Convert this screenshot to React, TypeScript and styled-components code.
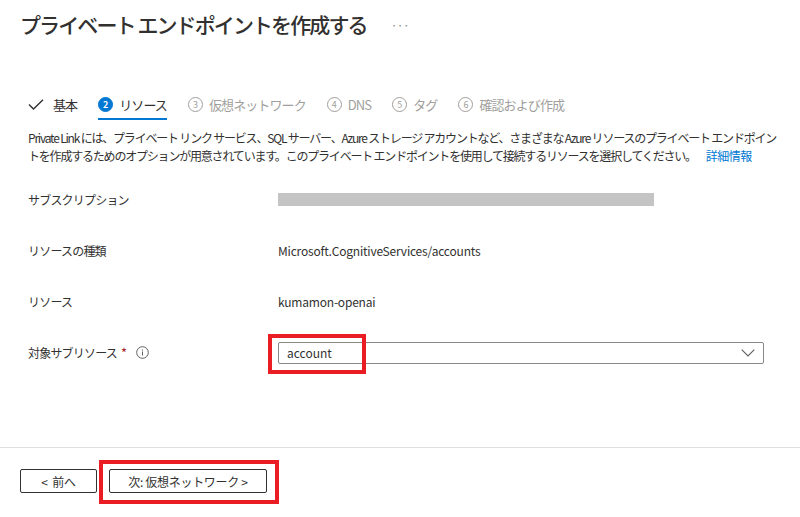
import React from 'react';
import styled, { createGlobalStyle } from 'styled-components';

const FONT = `"Segoe UI", "Noto Sans CJK JP", "Noto Sans", sans-serif`;

const GlobalStyle = createGlobalStyle`
  body {
    margin: 0;
    background: #ffffff;
    font-family: ${FONT};
    color: #323130;
  }
`;

const TABS = [
  { key: 'basic', label: '基本', done: true },
  { key: 'resource', label: 'リソース', num: 2, active: true },
  { key: 'network', label: '仮想ネットワーク', num: 3 },
  { key: 'dns', label: 'DNS', num: 4 },
  { key: 'tag', label: 'タグ', num: 5 },
  { key: 'review', label: '確認および作成', num: 6 },
];

function CheckIcon() {
  return (
    <svg width="19" height="11" viewBox="0 0 19 11" fill="none">
      <path d="M1 5.5 L5.5 10 L15 0.8" stroke="#323130" strokeWidth="1.4" />
    </svg>
  );
}

function Chevron() {
  return (
    <svg width="14" height="8" viewBox="0 0 14 8" fill="none">
      <path d="M0.7 0.7 L7 7 L13.3 0.7" stroke="#605e5c" strokeWidth="1.1" />
    </svg>
  );
}

function InfoIcon() {
  return (
    <svg width="13" height="13" viewBox="0 0 13 13" fill="none">
      <circle cx="6.5" cy="6.5" r="5.8" stroke="#605e5c" strokeWidth="1" />
      <rect x="6" y="5.5" width="1" height="4" fill="#605e5c" />
      <rect x="6" y="3.4" width="1" height="1.2" fill="#605e5c" />
    </svg>
  );
}

export default function App() {
  return (
    <Page>
      <GlobalStyle />
      <Header>
        <Title>プライベート エンドポイントを作成する</Title>
        <More>···</More>
      </Header>

      <Tabs>
        {TABS.map((t) => (
          <Tab key={t.key} active={!!t.active} disabled={!t.active && !t.done}>
            {t.done ? (
              <CheckIcon />
            ) : (
              <Step active={!!t.active}>{t.num}</Step>
            )}
            <TabLabel>{t.label}</TabLabel>
          </Tab>
        ))}
      </Tabs>

      <Description>
        <span>
          Private Link には、プライベート リンク サービス、SQL サーバー、Azure ストレージ アカウントなど、さまざまな Azure リソースのプライベート エンドポイントを作成するためのオプションが用意されています。このプライベート エンドポイントを使用して接続するリソースを選択してください。
        </span>
        <Link>詳細情報</Link>
      </Description>

      <Form>
        <Row>
          <Label>サブスクリプション</Label>
          <Redacted />
        </Row>
        <Row>
          <Label>リソースの種類</Label>
          <Value>Microsoft.CognitiveServices/accounts</Value>
        </Row>
        <Row>
          <Label>リソース</Label>
          <Value>kumamon-openai</Value>
        </Row>
        <Row>
          <Label>
            対象サブリソース<Required>*</Required>
            <InfoIcon />
          </Label>
          <Select>
            <SelectText>account</SelectText>
            <Chevron />
            <Highlight style={{ left: -11, top: -9, width: 98, height: 40 }} />
          </Select>
        </Row>
      </Form>

      <Footer>
        <Button>&lt;&nbsp; 前へ</Button>
        <Button wide>
          次: 仮想ネットワーク &gt;
          <Highlight style={{ left: -11, top: -10, width: 180, height: 44 }} />
        </Button>
      </Footer>
    </Page>
  );
}

const Page = styled.div`
  width: 800px;
  height: 517px;
  display: flex;
  flex-direction: column;
  overflow: hidden;
`;

const Header = styled.div`
  display: flex;
  align-items: center;
  gap: 24px;
  padding: 8px 20px 0 20px;
  height: 32px;
`;

const Title = styled.h1`
  margin: 0;
  font-size: 21px;
  font-weight: 500;
  letter-spacing: -1.9px;
  color: #323130;
`;

const More = styled.span`
  font-size: 12px;
  color: #8a8886;
  letter-spacing: -0.5px;
`;

const Tabs = styled.div`
  display: flex;
  align-items: center;
  gap: 21px;
  padding: 50px 28px 0 28px;
`;

const Tab = styled.div<{ active: boolean; disabled: boolean }>`
  display: flex;
  align-items: center;
  gap: 6px;
  height: 30px;
  box-sizing: border-box;
  border-bottom: 2px solid ${({ active }) => (active ? '#0078d4' : 'transparent')};
  color: ${({ disabled }) => (disabled ? '#a19f9d' : '#323130')};
`;

const TabLabel = styled.span`
  font-size: 13px;
  letter-spacing: -0.9px;
`;

const Step = styled.span<{ active: boolean }>`
  width: 15px;
  height: 15px;
  box-sizing: border-box;
  border-radius: 50%;
  display: flex;
  align-items: center;
  justify-content: center;
  font-size: 9px;
  font-weight: ${({ active }) => (active ? 700 : 400)};
  background: ${({ active }) => (active ? '#0078d4' : 'transparent')};
  color: ${({ active }) => (active ? '#ffffff' : '#a19f9d')};
  border: 1px solid ${({ active }) => (active ? '#0078d4' : '#a19f9d')};
`;

const Description = styled.p`
  margin: 9px 14px 0 28px;
  font-size: 12px;
  line-height: 18px;
  letter-spacing: -1.2px;
  color: #323130;
`;

const Link = styled.span`
  display: inline-block;
  color: #0078d4;
  margin-left: 10px;
  letter-spacing: -0.5px;
`;

const Form = styled.div`
  display: flex;
  flex-direction: column;
  padding: 0 36px 0 28px;
  margin-top: 9px;
`;

const Row = styled.div`
  display: grid;
  grid-template-columns: 250px 1fr;
  align-items: center;
  height: 51px;
`;

const Label = styled.div`
  display: flex;
  align-items: center;
  font-size: 12px;
  letter-spacing: -0.8px;
  color: #323130;
  gap: 4px;
`;

const Required = styled.span`
  color: #a4262c;
  font-size: 13px;
  margin-right: 6px;
`;

const Value = styled.div`
  font-size: 12px;
  letter-spacing: -0.2px;
  color: #323130;
`;

const Redacted = styled.div`
  width: 376px;
  height: 13px;
  background: #c4c4c4;
`;

const Select = styled.div`
  position: relative;
  height: 22px;
  box-sizing: border-box;
  border: 1px solid #8a8886;
  border-radius: 2px;
  display: flex;
  align-items: center;
  justify-content: space-between;
  padding: 0 8px 0 8px;
`;

const SelectText = styled.span`
  font-size: 12px;
  color: #323130;
`;

const Highlight = styled.span`
  position: absolute;
  box-sizing: border-box;
  border: 4px solid #ea1c24;
  pointer-events: none;
`;

const Footer = styled.div`
  margin-top: auto;
  border-top: 1px solid #e1dfdd;
  height: 70px;
  box-sizing: border-box;
  display: flex;
  align-items: flex-start;
  gap: 12px;
  padding: 21px 20px 0 20px;
`;

const Button = styled.button<{ wide?: boolean }>`
  position: relative;
  width: ${({ wide }) => (wide ? '158px' : '77px')};
  height: 24px;
  box-sizing: border-box;
  border: 1px solid #323130;
  border-radius: 2px;
  background: #ffffff;
  font-family: ${FONT};
  font-size: 12px;
  color: #323130;
  letter-spacing: -0.3px;
  padding: 0;
  display: flex;
  align-items: center;
  justify-content: center;
`;
